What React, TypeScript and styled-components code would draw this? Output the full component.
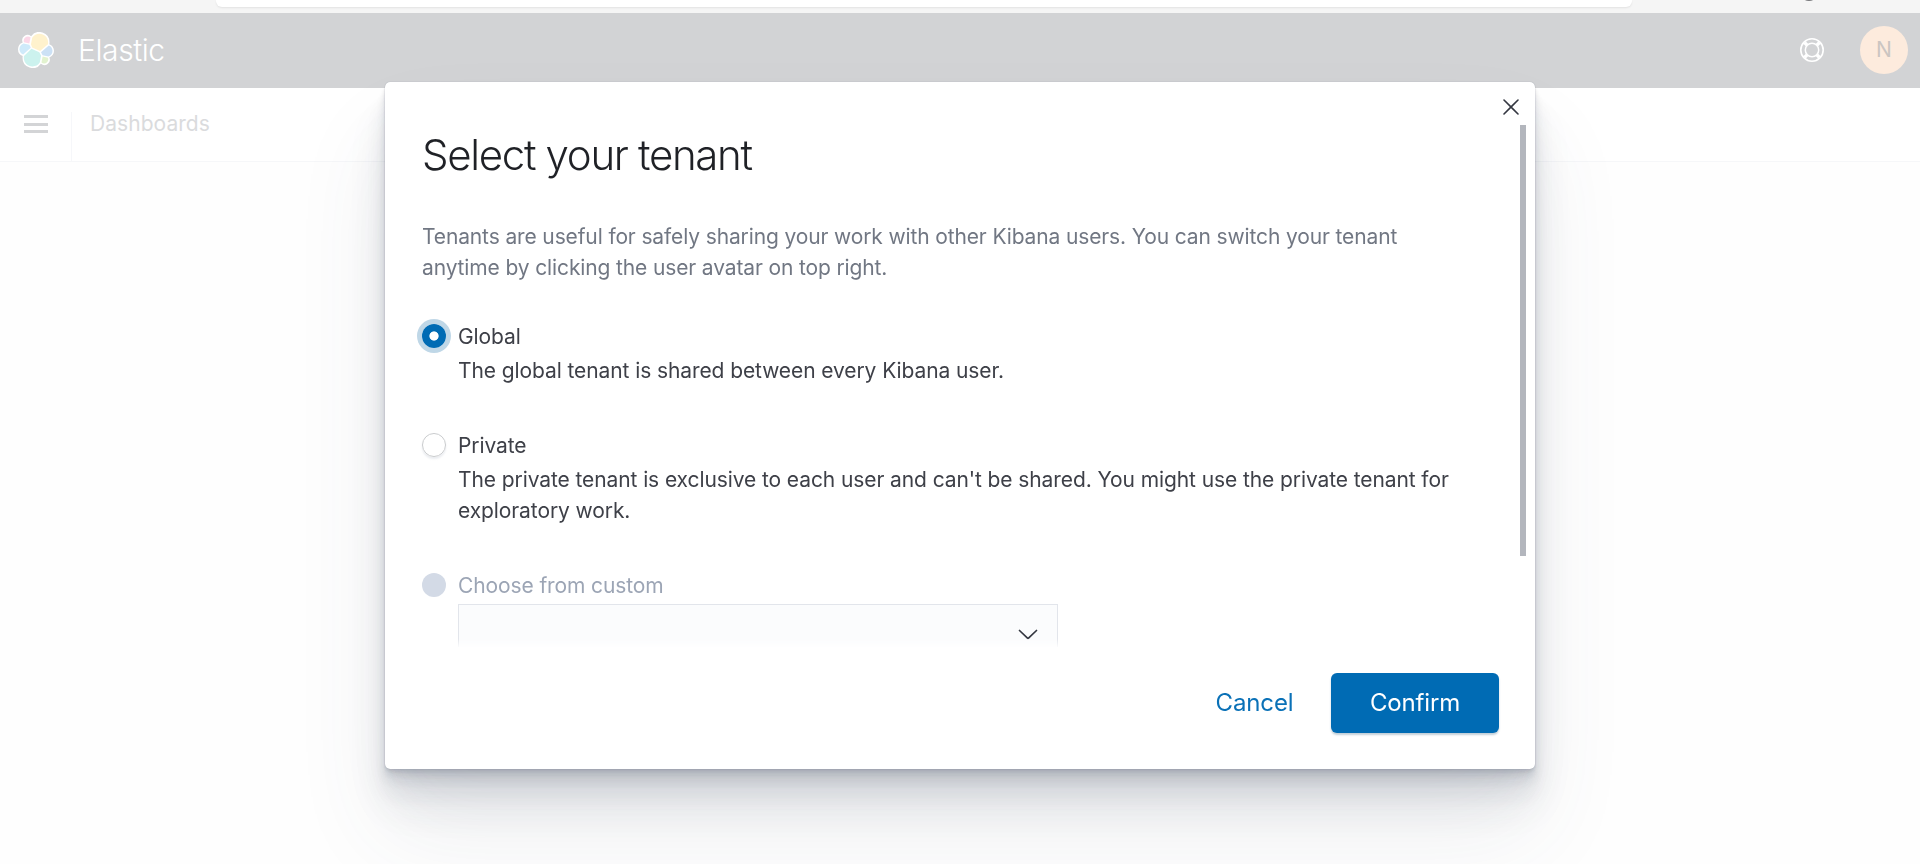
import React from 'react';
import styled, { createGlobalStyle, css } from 'styled-components';

const GlobalStyle = createGlobalStyle`
  * { box-sizing: border-box; }
  body { margin: 0; overflow: hidden; font-family: Inter, 'Liberation Sans', sans-serif; }
  h1, p { margin: 0; font-weight: 400; }
  button { font-family: inherit; border: 0; background: none; padding: 0; cursor: pointer; }
  svg { display: block; flex: none; }
`;

const Page = styled.div`
  height: 864px;
  display: flex;
  flex-direction: column;
  overflow: hidden;
`;

const BrowserStrip = styled.div`
  position: relative;
  height: 13px;
  flex: none;
  padding: 0 288px 0 216px;
  background: #f5f5f5;
  overflow: hidden;
`;

const AddressBar = styled.div`
  height: 7px;
  border-radius: 0 0 6px 6px;
  background: #fff;
  box-shadow: 0 1px 2px rgba(0, 0, 0, 0.08);
`;

const ProfileDot = styled.span`
  position: absolute;
  right: 102px;
  top: -17px;
  width: 18px;
  height: 18px;
  border-radius: 50%;
  background: #77787b;
`;

const Viewport = styled.div`
  position: relative;
  flex: 1;
  display: flex;
  flex-direction: column;
  background: #fefefe;
`;

const TopBar = styled.header`
  display: flex;
  align-items: center;
  height: 75px;
  flex: none;
  padding: 0 12px 1px 18px;
  background: #d2d3d5;
`;

const Brand = styled.span`
  flex: 1;
  margin-left: 24px;
  color: #fff;
  font-size: 30px;
  font-weight: 300;
  letter-spacing: -0.4px;
  line-height: 40px;
`;

const Avatar = styled.span`
  width: 48px;
  height: 48px;
  margin-left: 36px;
  border-radius: 50%;
  background: #fdebdd;
  color: #cbc5c1;
  font-size: 21px;
  line-height: 48px;
  text-align: center;
`;

const NavBar = styled.nav`
  display: flex;
  align-items: flex-end;
  height: 73px;
  flex: none;
  background: #fff;
  box-shadow: 0 1px 0 #f6f7f9;
`;

const MenuButton = styled.button`
  display: flex;
  flex-direction: column;
  gap: 4.5px;
  width: 71px;
  height: 46px;
  padding: 0 0 0 24px;
`;

const MenuLine = styled.span`
  width: 24px;
  height: 3px;
  background: #d3d4d6;
`;

const Crumb = styled.span`
  height: 49px;
  padding-left: 18px;
  border-left: 1px solid #f6f7fa;
  color: #dadbdd;
  font-size: 21px;
  letter-spacing: 0.05px;
  line-height: 24px;
`;

const Modal = styled.section`
  position: fixed;
  left: 385px;
  top: 82px;
  width: 1150px;
  height: 687px;
  display: flex;
  flex-direction: column;
  border-radius: 5px;
  background: #fff;
  box-shadow:
    0 0 1px rgba(65, 78, 101, 0.5),
    0 60px 96px rgba(65, 78, 101, 0.09),
    0 36px 48px rgba(65, 78, 101, 0.1),
    0 24px 24px rgba(65, 78, 101, 0.1),
    0 12px 12px rgba(65, 78, 101, 0.1),
    0 6px 6px rgba(65, 78, 101, 0.1),
    0 3px 3px rgba(65, 78, 101, 0.1);
`;

const CloseRow = styled.div`
  display: flex;
  align-items: flex-start;
  justify-content: flex-end;
  height: 43px;
  flex: none;
  padding: 17px 16px 0 0;
`;

const Scroller = styled.div`
  display: flex;
  height: 522px;
  padding-right: 9px;
`;

const ScrollContent = styled.div`
  flex: 1;
  height: 522px;
  padding-left: 37px;
  overflow: hidden;
  mask-image: linear-gradient(#000 calc(100% - 8px), rgba(0, 0, 0, 0.15));
`;

const ScrollThumb = styled.div`
  width: 6px;
  height: 431px;
  background: #b3b6bd;
`;

const Title = styled.h1`
  padding-top: 5px;
  color: #1f2126;
  font-size: 42px;
  font-weight: 300;
  letter-spacing: -1.32px;
  line-height: 50px;
`;

const textStyle = css`
  font-size: 21px;
  font-weight: 400;
  line-height: 31px;
  letter-spacing: -0.11px;
`;

const Intro = styled.p`
  ${textStyle}
  padding: 41px 70px 0 0;
  color: #717783;
  letter-spacing: -0.13px;
`;

const Option = styled.div<{ $gap: number }>`
  display: grid;
  grid-template-columns: 36px 1fr;
  align-items: start;
  margin-top: ${(p) => p.$gap}px;
`;

const Radio = styled.span<{ $state: 'checked' | 'empty' | 'disabled' }>`
  width: 24px;
  height: 24px;
  margin-top: 3px;
  border-radius: 50%;
  ${(p) =>
    p.$state === 'checked' &&
    css`
      background: radial-gradient(circle, #fff 4.2px, #006bb4 5px);
      box-shadow: 0 0 0 5px #bfd7e7;
    `}
  ${(p) =>
    p.$state === 'empty' &&
    css`
      border: 1px solid #c9cbcd;
      box-shadow: 0 2px 2px rgba(152, 162, 179, 0.2);
    `}
  ${(p) => p.$state === 'disabled' && css`background: #d3dae6;`}
`;

const OptionLabel = styled.span<{ $disabled?: boolean }>`
  ${textStyle}
  color: ${(p) => (p.$disabled ? '#9ca5b5' : '#3e4048')};
`;

const OptionText = styled.p`
  ${textStyle}
  grid-column: 2;
  padding: 3px 60px 0 0;
  color: #3e4048;
  letter-spacing: -0.093px;
`;

const SelectBox = styled.div`
  grid-column: 2;
  display: flex;
  justify-content: flex-end;
  width: 600px;
  height: 60px;
  margin-top: 3px;
  padding: 24px 19px 0 0;
  border: 1px solid #e2e5eb;
  background: #fbfcfd;
`;

const Footer = styled.footer`
  display: flex;
  justify-content: flex-end;
  padding: 26px 36px 0 0;
`;

const Button = styled.button<{ $filled?: boolean }>`
  height: 60px;
  width: ${(p) => (p.$filled ? 168 : 153)}px;
  border-radius: 6px;
  font-size: 24px;
  font-weight: 400;
  letter-spacing: -0.15px;
  line-height: 60px;
  color: ${(p) => (p.$filled ? '#fff' : '#0a71b7')};
  ${(p) =>
    p.$filled &&
    css`
      background: #006bb4;
      box-shadow: 0 2px 2px rgba(54, 97, 126, 0.3);
    `}
`;

const ElasticLogo = () => (
  <svg width="36" height="36" viewBox="0 0 32 32">
    <path fill="#fff" d="M32 16.77c0-2.68-1.66-5.03-4.163-5.95a9.35 9.35 0 0 0 .166-1.762 9.046 9.046 0 0 0-16.368-5.3 4.801 4.801 0 0 0-7.453 5.64A6.377 6.377 0 0 0 0 15.314a6.35 6.35 0 0 0 4.18 5.974 9.342 9.342 0 0 0-.165 1.763A9.028 9.028 0 0 0 20.37 28.3a4.79 4.79 0 0 0 7.465-5.633A6.377 6.377 0 0 0 32 16.77" />
    <path fill="#fff2cd" d="M12.58 13.787l7.002 3.211 7.066-6.213a7.85 7.85 0 0 0 .152-1.557c0-4.287-3.464-7.775-7.722-7.775a7.708 7.708 0 0 0-6.379 3.389l-1.174 6.126 1.055 2.819z" />
    <path fill="#ccf2ee" d="M5.333 21.228A7.964 7.964 0 0 0 5.18 22.8c0 4.3 3.475 7.8 7.746 7.8a7.72 7.72 0 0 0 6.42-3.43l1.166-6.1-1.556-2.99-7.03-3.22z" />
    <path fill="#fcd8e8" d="M5.29 9.098l4.798 1.137L11.14 4.74A3.79 3.79 0 0 0 8.85 3.96c-2.09 0-3.8 1.71-3.8 3.8 0 .46.08.91.24 1.338z" />
    <path fill="#cfeafa" d="M4.872 10.248A5.38 5.38 0 0 0 1.34 15.294c0 2.13 1.31 4.03 3.27 4.79l6.733-6.13-1.236-2.66z" />
    <path fill="#e2f2cf" d="M20.867 27.174a3.73 3.73 0 0 0 2.276.784c2.085 0 3.78-1.705 3.78-3.8 0-.464-.08-.914-.242-1.337l-4.79-1.13z" />
    <path fill="#cce1f5" d="M21.85 20.56l5.279 1.237a5.406 5.406 0 0 0 3.53-5.077c0-2.12-1.312-4.022-3.28-4.773l-6.905 6.093z" />
  </svg>
);

const HelpIcon = () => (
  <svg width="24" height="24" viewBox="0 0 24 24" fill="none" stroke="#fff">
    <circle cx="12" cy="12" r="11.2" strokeWidth="1.6" />
    <circle cx="12" cy="12" r="6.7" strokeWidth="1.5" />
    <path strokeWidth="3.4" d="M4.6 4.6l2.6 2.6M19.4 4.6l-2.6 2.6M4.6 19.4l2.6-2.6M19.4 19.4l-2.6-2.6" />
  </svg>
);

const CloseIcon = () => (
  <svg width="16" height="16" viewBox="0 0 16 16" fill="none" stroke="#343741" strokeWidth="1.6" strokeLinecap="round">
    <path d="M1 1l14 14M15 1l-14 14" />
  </svg>
);

const ChevronIcon = () => (
  <svg width="20" height="12" viewBox="0 0 20 12" fill="none" stroke="#343741" strokeWidth="1.7" strokeLinecap="round" strokeLinejoin="round">
    <path d="M1.5 1.5l8 7.6q.5.4 1 0l8-7.6" />
  </svg>
);

export default function App() {
  return (
    <Page>
      <GlobalStyle />
      <BrowserStrip>
        <AddressBar />
        <ProfileDot />
      </BrowserStrip>
      <Viewport>
        <TopBar>
          <ElasticLogo />
          <Brand>Elastic</Brand>
          <HelpIcon />
          <Avatar>N</Avatar>
        </TopBar>
        <NavBar>
          <MenuButton aria-label="Menu">
            <MenuLine />
            <MenuLine />
            <MenuLine />
          </MenuButton>
          <Crumb>Dashboards</Crumb>
        </NavBar>
      </Viewport>
      <Modal role="dialog">
        <CloseRow>
          <button aria-label="Close">
            <CloseIcon />
          </button>
        </CloseRow>
        <Scroller>
          <ScrollContent>
            <Title>Select your tenant</Title>
            <Intro>
              Tenants are useful for safely sharing your work with other Kibana users. You can switch your tenant
              anytime by clicking the user avatar on top right.
            </Intro>
            <Option $gap={38}>
              <Radio $state="checked" />
              <OptionLabel>Global</OptionLabel>
              <OptionText>The global tenant is shared between every Kibana user.</OptionText>
            </Option>
            <Option $gap={44}>
              <Radio $state="empty" />
              <OptionLabel>Private</OptionLabel>
              <OptionText>
                The private tenant is exclusive to each user and can't be shared. You might use the private tenant for
                exploratory work.
              </OptionText>
            </Option>
            <Option $gap={44}>
              <Radio $state="disabled" />
              <OptionLabel $disabled>Choose from custom</OptionLabel>
              <SelectBox>
                <ChevronIcon />
              </SelectBox>
            </Option>
          </ScrollContent>
          <ScrollThumb />
        </Scroller>
        <Footer>
          <Button>Cancel</Button>
          <Button $filled>Confirm</Button>
        </Footer>
      </Modal>
    </Page>
  );
}
